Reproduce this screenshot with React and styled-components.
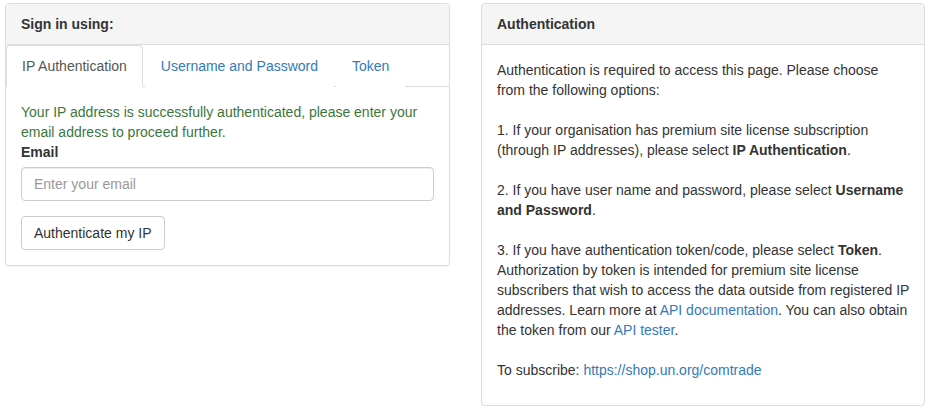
import React, { useState } from 'react';
import styled, { createGlobalStyle } from 'styled-components';

const GlobalStyle = createGlobalStyle`
	* {
		box-sizing: border-box;
	}
	body {
		margin: 0;
		background: #fff;
		font-family: 'Liberation Sans', Arial, Helvetica, sans-serif;
		font-size: 14px;
		line-height: 20px;
		color: #333;
	}
`;

const tabs = ['IP Authentication', 'Username and Password', 'Token'];

export default function App() {
	const [active, setActive] = useState(0);

	return (
		<>
			<GlobalStyle />
			<Row>
				<Column width="445px" left="5px">
					<Panel>
						<PanelHeading>Sign in using:</PanelHeading>
						<NavTabs>
							{tabs.map((t, i) => (
								<TabItem key={t}>
									<TabLink
										href="#"
										$active={i === active}
										onClick={(e) => {
											e.preventDefault();
											setActive(i);
										}}
									>
										{t}
									</TabLink>
								</TabItem>
							))}
						</NavTabs>
						<PanelBody>
							<SuccessText>
								Your IP address is successfully authenticated, please enter your
								email address to proceed further.
							</SuccessText>
							<FormGroup>
								<Label htmlFor="email">Email</Label>
								<Input id="email" type="email" placeholder="Enter your email" />
							</FormGroup>
							<Button type="button">Authenticate my IP</Button>
						</PanelBody>
					</Panel>
				</Column>

				<Column width="444px" left="31px">
					<Panel>
						<PanelHeading>Authentication</PanelHeading>
						<PanelBody $right="14px">
							<Paragraph>
								Authentication is required to access this page. Please choose
								from the following options:
								<br />
								<br />
								1. If your organisation has premium site license subscription
								(through IP addresses), please select <b>IP Authentication</b>.
								<br />
								<br />
								2. If you have user name and password, please select{' '}
								<b>Username and Password</b>.
								<br />
								<br />
								3. If you have authentication token/code, please select{' '}
								<b>Token</b>. Authorization by token is intended for premium site
								license subscribers that wish to access the data outside from
								registered IP addresses. Learn more at{' '}
								<Link href="#">API documentation</Link>. You can also obtain the
								token from our <Link href="#">API tester</Link>.
								<br />
								<br />
								To subscribe: <Link href="#">https://shop.un.org/comtrade</Link>
							</Paragraph>
						</PanelBody>
					</Panel>
				</Column>
			</Row>
		</>
	);
}

const Row = styled.div`
	display: flex;
	align-items: flex-start;
	padding-top: 3px;
`;
const Column = styled.div`
	width: ${(props) => props.width};
	margin-left: ${(props) => props.left};
	flex: none;
`;
const Panel = styled.div`
	background: #fff;
	border: 1px solid #ddd;
	border-radius: 4px;
	box-shadow: 0 1px 1px rgba(0, 0, 0, 0.05);
`;
const PanelHeading = styled.div`
	padding: 10px 15px;
	background: #f5f5f5;
	border-bottom: 1px solid #ddd;
	border-top-left-radius: 3px;
	border-top-right-radius: 3px;
	font-weight: bold;
	color: #333;
`;
const PanelBody = styled.div`
	padding: 15px;
	padding-right: ${(props) => props.$right || '15px'};
`;
const NavTabs = styled.ul`
	display: flex;
	margin: 0;
	padding: 0;
	list-style: none;
	border-bottom: 1px solid #ddd;
`;
const TabItem = styled.li`
	margin-bottom: -1px;
`;
const TabLink = styled.a`
	display: block;
	margin-right: 2px;
	padding: 10px 15px;
	line-height: 20px;
	border: 1px solid transparent;
	border-radius: 4px 4px 0 0;
	text-decoration: none;
	color: ${(props) => (props.$active ? '#555' : '#337ab7')};
	background: #fff;
	border-color: ${(props) =>
		props.$active ? '#ddd #ddd transparent' : 'transparent'};
	cursor: ${(props) => (props.$active ? 'default' : 'pointer')};
`;
const SuccessText = styled.div`
	color: #3c763d;
`;
const FormGroup = styled.div`
	margin-bottom: 15px;
`;
const Label = styled.label`
	display: inline-block;
	margin-bottom: 5px;
	font-weight: bold;
`;
const Input = styled.input`
	display: block;
	width: 100%;
	height: 34px;
	padding: 6px 12px;
	font-family: inherit;
	font-size: 14px;
	line-height: 20px;
	color: #555;
	background: #fff;
	border: 1px solid #ccc;
	border-radius: 4px;
	box-shadow: inset 0 1px 1px rgba(0, 0, 0, 0.075);
	outline: none;
	&::placeholder {
		color: #999;
	}
`;
const Button = styled.button`
	display: inline-block;
	height: 34px;
	padding: 6px 12px;
	font-family: inherit;
	font-size: 14px;
	line-height: 20px;
	color: #333;
	background: #fff;
	border: 1px solid #ccc;
	border-radius: 4px;
	cursor: pointer;
`;
const Paragraph = styled.p`
	margin: 0 0 10px;
`;
const Link = styled.a`
	color: #337ab7;
	text-decoration: none;
`;
